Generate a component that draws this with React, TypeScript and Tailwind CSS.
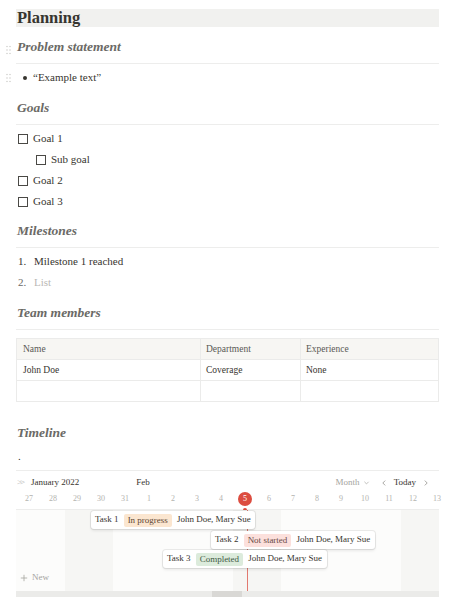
import React from 'react';

function Grip() {
  return (
    <svg width="5" height="9" viewBox="0 0 5 9" className="absolute -left-[10px] top-1/2 -translate-y-1/2">
      {[0, 1].map((c) =>
        [0, 1, 2].map((r) => <circle key={`${c}-${r}`} cx={1 + c * 3} cy={1 + r * 3.5} r="0.7" fill="#c7c6c3" />)
      )}
    </svg>
  );
}

function Heading({ children, grip, divider = true }: { children: React.ReactNode; grip?: boolean; divider?: boolean }) {
  return (
    <div className={`relative pb-[6px] ${divider ? 'border-b border-[#ededec]' : ''}`}>
      {grip && <Grip />}
      <h2 className="pl-px text-[13.5px] leading-[20px] font-bold italic text-[#6b6a66]">{children}</h2>
    </div>
  );
}

function Check({ label, indent }: { label: string; indent?: boolean }) {
  return (
    <div className={`flex items-center h-[21px] ${indent ? 'pl-5' : 'pl-[2px]'}`}>
      <span className="w-[10px] h-[10px] border-[1.5px] border-[#4a4945] mr-[5px]" />
      <span className="text-[11px]">{label}</span>
    </div>
  );
}

const days = ['27', '28', '29', '30', '31', '1', '2', '3', '4', '5', '6', '7', '8', '9', '10', '11', '12', '13'];
const weekend = [2, 3, 9, 10, 16, 17];

function Card({ left, top, task, status, pill }: { left: string; top: string; task: string; status: string; pill: string }) {
  return (
    <div
      className={`absolute ${left} ${top} w-[164px] h-[18px] bg-white rounded-[3px] shadow-[0_0_0_1px_rgba(15,15,15,0.08),0_2px_3px_rgba(15,15,15,0.08)] flex items-center px-[4px] gap-[5px] text-[9px] text-[#37352f] whitespace-nowrap`}
    >
      <span>{task}</span>
      <span className={`px-[4px] rounded-[2px] leading-[13px] ${pill}`}>{status}</span>
      <span>John Doe, Mary Sue</span>
    </div>
  );
}

function Timeline() {
  return (
    <div className="mt-[3px] border-t border-[#ededec] relative">
      {/* header */}
      <div className="h-[39px] border-b border-[#ededec] relative">
        <div className="flex items-center h-[23px] text-[9px]">
          <span className="w-[15px] pl-[1px] text-[#b4b3af] text-[9px] tracking-[-2px]">&gt;&gt;</span>
          <span className="text-[#37352f]">January 2022</span>
          <span className="ml-[57px] text-[#37352f]">Feb</span>
          <div className="ml-auto flex items-center gap-[6px] pr-[9px]">
            <span className="text-[#a5a4a0]">Month</span>
            <svg width="7" height="7" viewBox="0 0 10 10" className="-ml-[3px]">
              <path d="M2 4l3 3 3-3" stroke="#b4b3af" strokeWidth="1.2" fill="none" />
            </svg>
            <svg width="8" height="8" viewBox="0 0 10 10" className="ml-[4px]">
              <path d="M6.5 2L3.5 5l3 3" stroke="#a5a4a0" strokeWidth="1.2" fill="none" />
            </svg>
            <span className="text-[#37352f]">Today</span>
            <svg width="8" height="8" viewBox="0 0 10 10">
              <path d="M3.5 2l3 3-3 3" stroke="#a5a4a0" strokeWidth="1.2" fill="none" />
            </svg>
          </div>
        </div>
        <div className="flex pl-px text-[8px] text-[#b4b3af]">
          {days.map((d, i) => (
            <div key={i} className="w-[24px] shrink-0 flex justify-center">
              {d === '5' ? (
                <span className="relative w-[14px] h-[14px] -mt-[2px] rounded-full bg-[#dc4c3f] text-white flex items-center justify-center text-[8px]">
                  5
                  <span className="absolute left-[5px] top-[16px] w-[4px] h-[4px] rounded-full bg-[#dc4c3f]" />
                </span>
              ) : (
                <span className="leading-[10px]">{d}</span>
              )}
            </div>
          ))}
        </div>
      </div>
      {/* body */}
      <div className="relative h-[81px] bg-[#fcfcfb] overflow-hidden">
        <div className="flex pl-px h-full">
          {days.map((d, i) => (
            <div key={i} className={`w-[24px] shrink-0 h-full ${weekend.includes(i) ? 'bg-[#f6f6f4]' : ''}`} />
          ))}
        </div>
        <div className="absolute left-[231px] top-0 h-full w-px bg-[#e2796f]" />
        <Card left="left-[75px]" top="top-[1px]" task="Task 1" status="In progress" pill="bg-[#fbe6d0] text-[#5e4634]" />
        <Card left="left-[195px]" top="top-[21px]" task="Task 2" status="Not started" pill="bg-[#fce0dc] text-[#6a4a46]" />
        <Card left="left-[147px]" top="top-[40px]" task="Task 3" status="Completed" pill="bg-[#dcebdc] text-[#3f5a44]" />
        <div className="absolute left-[4px] top-[61px] flex items-center gap-[4px] text-[9px] text-[#a5a4a0]">
          <svg width="8" height="8" viewBox="0 0 10 10">
            <path d="M5 1v8M1 5h8" stroke="#a5a4a0" strokeWidth="1" />
          </svg>
          <span>New</span>
        </div>
      </div>
      {/* scrollbar */}
      <div className="h-[7px] bg-[#ebebe9] relative">
        <div className="absolute left-[196px] top-0 w-[30px] h-full bg-[#d9d8d5]" />
      </div>
    </div>
  );
}

export default function App() {
  return (
    <div className="w-[466px] h-[597px] overflow-hidden bg-white text-[#37352f] font-['Liberation_Serif',serif]">
      <div className="ml-4 w-[423px] pt-[9px]">
        <h1 className="bg-[#f1f1ef] h-[18px] pl-px text-[16.5px] leading-[18px] font-bold text-[#37352f]">Planning</h1>

        <div className="mt-[10px]">
          <Heading grip>Problem statement</Heading>
        </div>
        <div className="relative mt-[3px] flex items-center h-[21px] text-[11px]">
          <Grip />
          <span className="w-[17px] flex justify-center">
            <span className="w-[4px] h-[4px] rounded-full bg-[#37352f]" />
          </span>
          <span>“Example text”</span>
        </div>

        <div className="mt-[10px]">
          <Heading>Goals</Heading>
        </div>
        <div className="mt-[3px]">
          <Check label="Goal 1" />
          <Check label="Sub goal" indent />
          <Check label="Goal 2" />
          <Check label="Goal 3" />
        </div>

        <div className="mt-[9px]">
          <Heading>Milestones</Heading>
        </div>
        <ol className="mt-[3px] text-[11px]">
          <li className="flex items-center h-[21px]">
            <span className="w-[18px] pl-[2px]">1.</span>
            <span>Milestone 1 reached</span>
          </li>
          <li className="flex items-center h-[21px]">
            <span className="w-[18px] pl-[2px] text-[#6b6a66]">2.</span>
            <span className="text-[#b9b8b5]">List</span>
          </li>
        </ol>

        <div className="mt-[10px]">
          <Heading>Team members</Heading>
        </div>
        <table className="mt-[8px] w-full border-collapse text-[9.5px] text-[#37352f]">
          <tbody>
            <tr className="bg-[#f7f6f3] h-[21px]">
              <td className="border border-[#ebebea] px-[6px] w-[184px] text-[#5a5955]">Name</td>
              <td className="border border-[#ebebea] px-[5px] w-[100px] text-[#5a5955]">Department</td>
              <td className="border border-[#ebebea] px-[5px] text-[#5a5955]">Experience</td>
            </tr>
            <tr className="h-[21px]">
              <td className="border border-[#ebebea] px-[6px]">John Doe</td>
              <td className="border border-[#ebebea] px-[5px]">Coverage</td>
              <td className="border border-[#ebebea] px-[5px]">None</td>
            </tr>
            <tr className="h-[21px]">
              <td className="border border-[#ebebea]" />
              <td className="border border-[#ebebea]" />
              <td className="border border-[#ebebea]" />
            </tr>
          </tbody>
        </table>

        <div className="mt-[21px]">
          <Heading divider={false}>Timeline</Heading>
        </div>
        <div className="h-[21px] -mt-[3px] flex items-center pl-[2px] text-[11px]">.</div>
        <Timeline />
      </div>
    </div>
  );
}
